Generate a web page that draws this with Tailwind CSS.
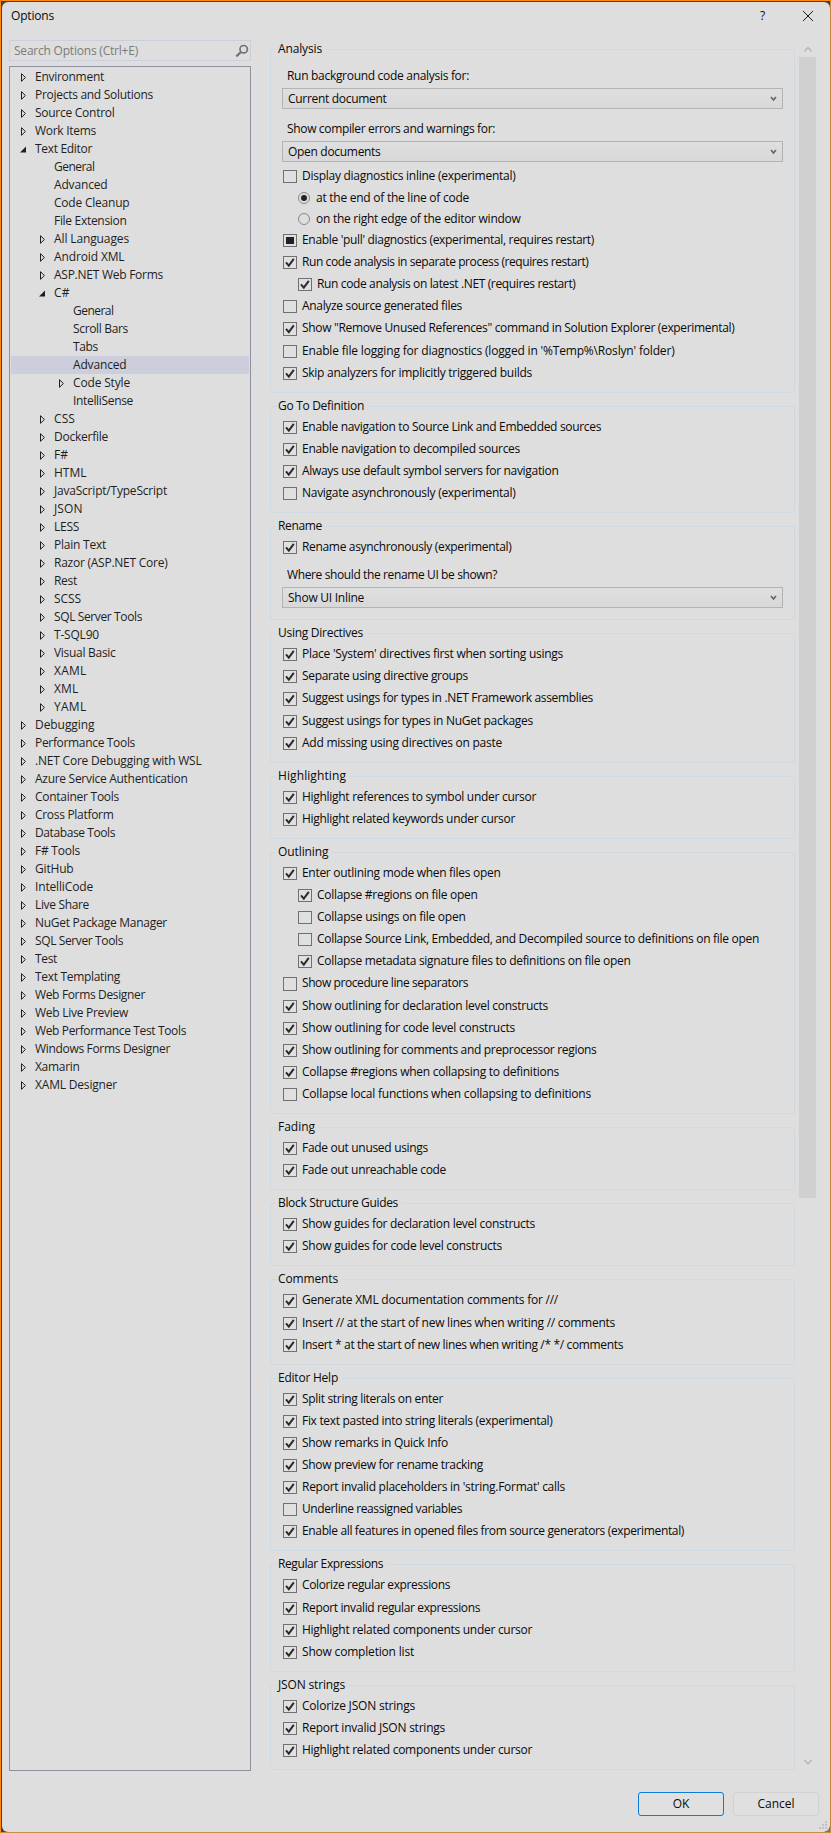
<!DOCTYPE html>
<html lang="en">
<head>
<meta charset="utf-8">
<title>Options</title>
<script src="https://cdn.jsdelivr.net/npm/@tailwindcss/browser@4"></script>
</head>
<body class="bg-[#3a3a38]">
<div class="relative flex h-[1833px] w-[831px] overflow-hidden border border-t-[#ff8a0d] border-l-[#ff8a0d] border-r-[#c58843] border-b-[#c98c48] bg-[#444340] pt-px pl-px font-['Open_Sans','Noto_Sans',sans-serif] text-[12px] text-[#0a0a0a]">
  <div class="flex flex-1 flex-col rounded-[6px] bg-[#dedede]">
    <header class="flex h-[38px] shrink-0 items-start pl-[9px]">
      <span class="mt-[4px] leading-[20px]" data-w="42">Options</span>
      <span class="mt-[4px] ml-auto w-[9px] leading-[20px]">?</span>
      <svg class="mt-[8px] mr-[16px] ml-[33px] h-[12px] w-[12px]" viewBox="0 0 12 12" fill="none" stroke="#1a1a1a"><path d="M1 1 11 11M11 1 1 11"/></svg>
    </header>
    <div class="flex h-[1733px] shrink-0">
      <aside class="ml-[7px] flex w-[242px] flex-col">
        <div class="flex h-[21px] items-center border border-[#cccede] pl-[4px] text-[#7b7b7b]">
          <span class="leading-[19px]" data-w="123">Search Options (Ctrl+E)</span>
          <svg class="mr-[1px] ml-auto h-[14px] w-[14px]" viewBox="0 0 14 14" fill="none" stroke="#717171"><circle cx="8.7" cy="5.2" r="3.7" stroke-width="1.7"/><path d="M6 8 1.3 12.4" stroke-width="2.2"/></svg>
        </div>
        <nav id="tree" class="mt-[5px] h-[1705px] border border-[#8e8fa0] px-[1px] pt-[1px] text-[#1e1e1e]"></nav>
      </aside>
      <main id="groups" class="mt-[9px] ml-[19px] flex w-[525px] flex-col gap-[13px]"></main>
      <div class="ml-[4px] flex w-[17px] flex-col items-center">
        <svg class="mt-[5px] h-[8px] w-[10px] shrink-0" viewBox="0 0 10 8" fill="none" stroke="#b5b5b5" stroke-width="1.3"><path d="M1.5 6.5 5 2.5l3.5 4"/></svg>
        <div class="mt-[4px] h-[1141px] w-[17px] shrink-0 bg-[#d0d0d0]"></div>
        <svg class="mt-[560px] h-[8px] w-[10px] shrink-0" viewBox="0 0 10 8" fill="none" stroke="#b5b5b5" stroke-width="1.3"><path d="M1.5 2 5 6l3.5-4"/></svg>
      </div>
    </div>
    <footer class="flex justify-end gap-[9px] pt-[19px] pr-[11px]">
      <button class="flex h-[24px] w-[86px] justify-center rounded-[3px] border border-[#0b7cd8] bg-[#e0e0e0] leading-[21px]">OK</button>
      <button class="flex h-[24px] w-[86px] justify-center rounded-[3px] border border-[#d2d2d2] bg-[#e0e0e0] leading-[21px]"><span data-w="36">Cancel</span></button>
    </footer>
  </div>
  <svg class="absolute right-0 bottom-0 h-[12px] w-[12px]" viewBox="0 0 12 12" fill="#c2c2c2"><path d="M7 1h2v2H7zM4 4h2v2H4zM7 4h2v2H7zM1 7h2v2H1zM4 7h2v2H4zM7 7h2v2H7z"/><path d="M12 6v6H6q5-1 6-6" fill="#77736d"/></svg>
  <div class="absolute bottom-[-1px] left-0 h-px w-[250px] bg-[#a8703a]"></div>
</div>
<script>
// label, depth, state (c = collapsed, o = open, s = selected, - = leaf), text width
const tree = [
["Environment",0,"c",68],["Projects and Solutions",0,"c",117],["Source Control",0,"c",78.5],["Work Items",0,"c",60],["Text Editor",0,"o",56],
["General",1,"-",39.5],["Advanced",1,"-",52.5],["Code Cleanup",1,"-",74.5],["File Extension",1,"-",71.5],["All Languages",1,"c",74],["Android XML",1,"c",69.5],["ASP.NET Web Forms",1,"c",108],["C#",1,"o",14.5],
["General",2,"-",39.5],["Scroll Bars",2,"-",54],["Tabs",2,"-",24],["Advanced",2,"s",52.5],["Code Style",2,"c",56],["IntelliSense",2,"-",59],
["CSS",1,"c",20],["Dockerfile",1,"c",53],["F#",1,"c",13],["HTML",1,"c",31.5],["JavaScript/TypeScript",1,"c",112],["JSON",1,"c",27.5],["LESS",1,"c",24],["Plain Text",1,"c",51],["Razor (ASP.NET Core)",1,"c",112.5],["Rest",1,"c",22],["SCSS",1,"c",26],["SQL Server Tools",1,"c",87],["T-SQL90",1,"c",44],["Visual Basic",1,"c",60.5],["XAML",1,"c",31.5],["XML",1,"c",23.5],["YAML",1,"c",31.5],
["Debugging",0,"c",58.5],["Performance Tools",0,"c",99],[".NET Core Debugging with WSL",0,"c",165.5],["Azure Service Authentication",0,"c",151.5],["Container Tools",0,"c",83],["Cross Platform",0,"c",77.5],["Database Tools",0,"c",79],["F# Tools",0,"c",44],["GitHub",0,"c",37.5],["IntelliCode",0,"c",57],["Live Share",0,"c",53],["NuGet Package Manager",0,"c",131],["SQL Server Tools",0,"c",87],["Test",0,"c",21],["Text Templating",0,"c",84],["Web Forms Designer",0,"c",109],["Web Live Preview",0,"c",92],["Web Performance Test Tools",0,"c",150],["Windows Forms Designer",0,"c",134],["Xamarin",0,"c",43.5],["XAML Designer",0,"c",81]];
const indent = ["pl-[9px]", "pl-[28px]", "pl-[47px]"];
const arrows = {
  c: '<svg class="h-[11px] w-[8px]" viewBox="0 0 8 11" fill="none" stroke="#1e1e1e"><path d="M1.5 1.7v7.6L5.4 5.5z"/></svg>',
  o: '<svg class="h-[11px] w-[8px]" viewBox="0 0 8 11" fill="#1e1e1e"><path d="M6 2.5v6H0z"/></svg>'
};
document.getElementById("tree").innerHTML = tree.map(([t, d, s, w]) =>
  `<div class="flex h-[18px] items-center ${indent[d]} ${s === "s" ? "bg-[#cccedc]" : ""}"><span class="w-[15px] shrink-0">${arrows[s] || ""}</span><span class="leading-[18px] whitespace-nowrap" data-w="${w}">${t}</span></div>`).join("");

// rows: x = checked, e = empty, m = mixed, X/E = same with one extra pixel of height,
// r/R = radio off/on, l = label, d = dropdown; ">" marks an indented checkbox
const groups = [
["Analysis",43,"h-[344px]",[["l","Run background code analysis for:",181],["d","Current document",97.5],["l","Show compiler errors and warnings for:",207],["d","Open documents",91.5],["e","Display diagnostics inline (experimental)",212.5],["R","at the end of the line of code",152],["r","on the right edge of the editor window",203.5],["m","Enable 'pull' diagnostics (experimental, requires restart)",291],["x","Run code analysis in separate process (requires restart)",285.5],["x>","Run code analysis on latest .NET (requires restart)",257.5],["e","Analyze source generated files",159],["X","Show \"Remove Unused References\" command in Solution Explorer (experimental)",431.5],["e","Enable file logging for diagnostics (logged in '%Temp%\\Roslyn' folder)",371.5],["x","Skip analyzers for implicitly triggered builds",229]]],
["Go To Definition",85,"h-[107px]",[["x","Enable navigation to Source Link and Embedded sources",298],["x","Enable navigation to decompiled sources",217],["x","Always use default symbol servers for navigation",255.5],["e","Navigate asynchronously (experimental)",212.5]]],
["Rename",43,"h-[94px]",[["x","Rename asynchronously (experimental)",208.5],["l","Where should the rename UI be shown?",209],["d","Show UI Inline",75]]],
["Using Directives",84,"h-[130px]",[["x","Place 'System' directives first when sorting usings",260],["x","Separate using directive groups",165],["X","Suggest usings for types in .NET Framework assemblies",290],["x","Suggest usings for types in NuGet packages",230],["x","Add missing using directives on paste",199]]],
["Highlighting",67,"h-[63px]",[["x","Highlight references to symbol under cursor",233],["x","Highlight related keywords under cursor",212]]],
["Outlining",49.5,"h-[262px]",[["x","Enter outlining mode when files open",197.5],["x>","Collapse #regions on file open",159.5],["e>","Collapse usings on file open",147.5],["e>","Collapse Source Link, Embedded, and Decompiled source to definitions on file open",441],["x>","Collapse metadata signature files to definitions on file open",312.5],["E","Show procedure line separators",165],["x","Show outlining for declaration level constructs",245],["x","Show outlining for code level constructs",212],["x","Show outlining for comments and preprocessor regions",293.5],["x","Collapse #regions when collapsing to definitions",256],["e","Collapse local functions when collapsing to definitions",288]]],
["Fading",36,"h-[63px]",[["x","Fade out unused usings",125],["x","Fade out unreachable code",143]]],
["Block Structure Guides",119,"h-[63px]",[["x","Show guides for declaration level constructs",232],["x","Show guides for code level constructs",199]]],
["Comments",59,"h-[86px]",[["X","Generate XML documentation comments for ///",255],["x","Insert // at the start of new lines when writing // comments",312],["x","Insert * at the start of new lines when writing /* */ comments",320]]],
["Editor Help",59,"h-[173px]",[["x","Split string literals on enter",140],["x","Fix text pasted into string literals (experimental)",249.5],["x","Show remarks in Quick Info",145],["x","Show preview for rename tracking",180],["x","Report invalid placeholders in 'string.Format' calls",262],["e","Underline reassigned variables",159],["x","Enable all features in opened files from source generators (experimental)",381]]],
["Regular Expressions",104,"h-[108px]",[["X","Colorize regular expressions",147],["x","Report invalid regular expressions",177],["x","Highlight related components under cursor",229],["x","Show completion list",111]]],
["JSON strings",66,"h-[85px]",[["x","Colorize JSON strings",112],["x","Report invalid JSON strings",142],["x","Highlight related components under cursor",229]]]];

const check = '<svg class="h-full w-full" viewBox="0 0 12 11" fill="none" stroke="#2b2b2b" stroke-width="2"><path d="M2 5.4 4.8 8.6 9.8 1.8"/></svg>';
const text = (t, w) => `<span class="whitespace-nowrap" data-w="${w}">${t}</span>`;
function row([k, t, w]) {
  if (k === "l") return `<div class="h-[25px] pl-[16px] leading-[25px]">${text(t, w)}</div>`;
  if (k === "d") return `<div class="mx-[11px] flex h-[21px] shrink-0 items-center border border-[#b3b3b3] bg-linear-to-b from-[#dfdfdf] to-[#d8d8d8] pl-[5px] leading-[18px]">${text(t, w)}<svg class="mr-[5px] ml-auto h-[6px] w-[7px]" viewBox="0 0 7 6" fill="none" stroke="#606060" stroke-width="1.5"><path d="M1 1 3.5 4 6 1"/></svg></div>`;
  if (k === "r" || k === "R") return `<div class="flex shrink-0 ${k === "R" ? "h-[20px]" : "h-[22px]"} items-center pl-[27px]"><span class="flex h-[12px] w-[12px] items-center justify-center rounded-full border border-[#888]">${k === "R" ? '<i class="h-[6px] w-[6px] rounded-full bg-[#222]"></i>' : ""}</span><span class="ml-[6px] leading-[20px]">${text(t, w)}</span></div>`;
  const c = k[0], tall = c === "X" || c === "E";
  const mark = c === "x" || c === "X" ? check : c === "m" ? '<i class="h-[7px] w-[8px] bg-[#222]"></i>' : "";
  return `<div class="flex shrink-0 items-start ${tall ? "h-[23px]" : "h-[22px]"} ${k[1] ? "pl-[27px]" : "pl-[12px]"}"><span class="mt-[4px] flex ${tall ? "h-[14px]" : "h-[13px]"} w-[14px] shrink-0 items-center justify-center border border-[#707070] bg-[#e0e0e0]">${mark}</span><span class="ml-[5px] leading-[20px]">${text(t, w)}</span></div>`;
}
document.getElementById("groups").innerHTML = groups.map(([t, w, h, rows]) => {
  const first = rows[0][0] === "l";
  let body = rows.map(row);
  if (first) body = [
    '<div class="mt-[5px] flex flex-col">' + body[0] + body[1] + '</div>',
    '<div class="mt-[7px] mb-[4px] flex flex-col">' + body[2] + body[3] + '</div>', ...body.slice(4)];
  if (t === "Rename") body[1] = '<div class="mt-[3px]">' + body[1] + "</div>";
  return `<section class="relative flex ${h} shrink-0 flex-col rounded-[3px] border border-[#cfd9e1] ${first ? "pt-[8px]" : "pt-[10px]"}"><h2 class="absolute top-[-11px] left-[5px] bg-[#dedede] pr-[4px] pl-[2px] leading-[20px]">${text(t, w)}</h2>${body.join("")}</section>`;
}).join("");

// Fit each label to its own width
const ctx = document.createElement("canvas").getContext("2d");
ctx.font = "12px 'Open Sans'";
for (const el of document.querySelectorAll("[data-w]")) {
  const s = el.textContent;
  el.style.letterSpacing = ((+el.dataset.w + 1 - ctx.measureText(s).width) / s.length).toFixed(3) + "px";
}
</script>
</body>
</html>
